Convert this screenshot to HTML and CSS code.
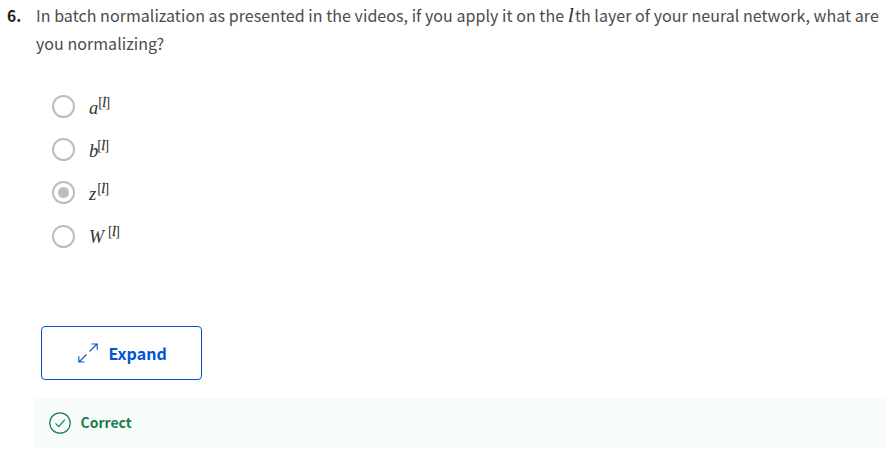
FILE: index.html
```html
<!DOCTYPE html>
<html lang="en">
<head>
<meta charset="utf-8">
<title>Quiz question</title>
<link rel="stylesheet" href="styles.css">
</head>
<body>
<main class="question">
  <div class="number">6.</div>
  <div class="content">
    <p class="prompt"><span class="line line-first">In batch normalization as presented in the videos, if you apply it on the <i class="math ell">l</i>th layer of your neural network, what are</span> <span class="line line-second">you normalizing?</span></p>
    <div class="options">
      <label class="option"><span class="radio"></span><span class="math"><i>a</i><sup>[<i>l</i>]</sup></span></label>
      <label class="option"><span class="radio"></span><span class="math narrow"><i>b</i><sup>[<i>l</i>]</sup></span></label>
      <label class="option"><span class="radio checked"></span><span class="math letter-z"><i>z</i><sup>[<i>l</i>]</sup></span></label>
      <label class="option"><span class="radio"></span><span class="math wide"><i>W</i><sup>[<i>l</i>]</sup></span></label>
    </div>
    <button class="expand" type="button">
      <svg width="20" height="20" viewBox="0 0 20 20" fill="none" stroke="currentColor" stroke-width="1.1"><path d="M11.5 8.5 19 1M13.5 1H19.2v5.7M8.5 11.5 1 19M.8 13.3V19h5.7"/></svg>
      <span class="expand-label">Expand</span>
    </button>
    <div class="feedback">
      <svg width="22" height="22" viewBox="0 0 22 22" fill="none" stroke="currentColor" stroke-width="1.2"><circle cx="11" cy="11" r="10.2"/><path d="m6.5 11.3 3.3 3.3 6-7"/></svg>
      <span class="feedback-label">Correct</span>
    </div>
  </div>
</main>
</body>
</html>
```
FILE: styles.css
```css
* { box-sizing: border-box; }
body {
  margin: 0;
  background: #fff;
  color: #373a3c;
  font-family: "Noto Sans CJK SC", "Open Sans", sans-serif;
  font-size: 16px;
}
.question { display: flex; padding: 1px 6px 0 7px; }
.number { width: 28px; flex: none; font-weight: 700; font-size: 15.5px; line-height: 28px; color: #1f1f1f; }
.content { flex: 1; min-width: 0; }
.prompt { margin: 0; padding-left: 1px; height: 56px; line-height: 28px; white-space: nowrap; color: #4b4b4b; letter-spacing: 0.045px; }
.line { display: block; height: 28px; }
.math { font-family: "Liberation Serif", serif; color: #333; }
.ell { font-size: 22px; line-height: 20px; margin-right: 1px; }
.options { padding: 28px 0 0 17px; }
.option { display: flex; align-items: center; height: 43.2px; }
.radio {
  width: 23px;
  height: 23px;
  flex: none;
  margin-right: 14px;
  border: 2px solid #bdbdbd;
  border-radius: 50%;
  display: grid;
  place-items: center;
}
.checked::after { content: ""; width: 11px; height: 11px; border-radius: 50%; background: #bdbdbd; }
.option .math { font-size: 18.5px; line-height: 24px; padding-top: 2px; }
.option sup { font-size: 14px; line-height: 0; vertical-align: 7px; letter-spacing: -0.7px; }
.option sup i { -webkit-text-stroke: 0.3px #333; }
.narrow sup { margin-left: -1px; }
.letter-z sup { margin-left: 1px; }
.wide > i { font-size: 18px; }
.wide sup { margin-left: 4px; }
.expand {
  display: flex;
  align-items: center;
  width: 161px;
  height: 54px;
  margin: 68px 0 0 6px;
  padding: 0 0 0 36px;
  gap: 10.5px;
  background: #fff;
  border: 1px solid #0056d2;
  border-radius: 4px;
  color: #0056d2;
  font: 700 16px "Noto Sans CJK SC", sans-serif;
}
.feedback {
  display: flex;
  align-items: center;
  gap: 10px;
  height: 50px;
  margin-top: 18px;
  padding-left: 14px;
  background: #f7fbf9;
  color: #1d7c50;
  font-size: 14px;
  font-weight: 700;
}
.feedback-label { margin: 0 0 2px -0.5px; }
```
